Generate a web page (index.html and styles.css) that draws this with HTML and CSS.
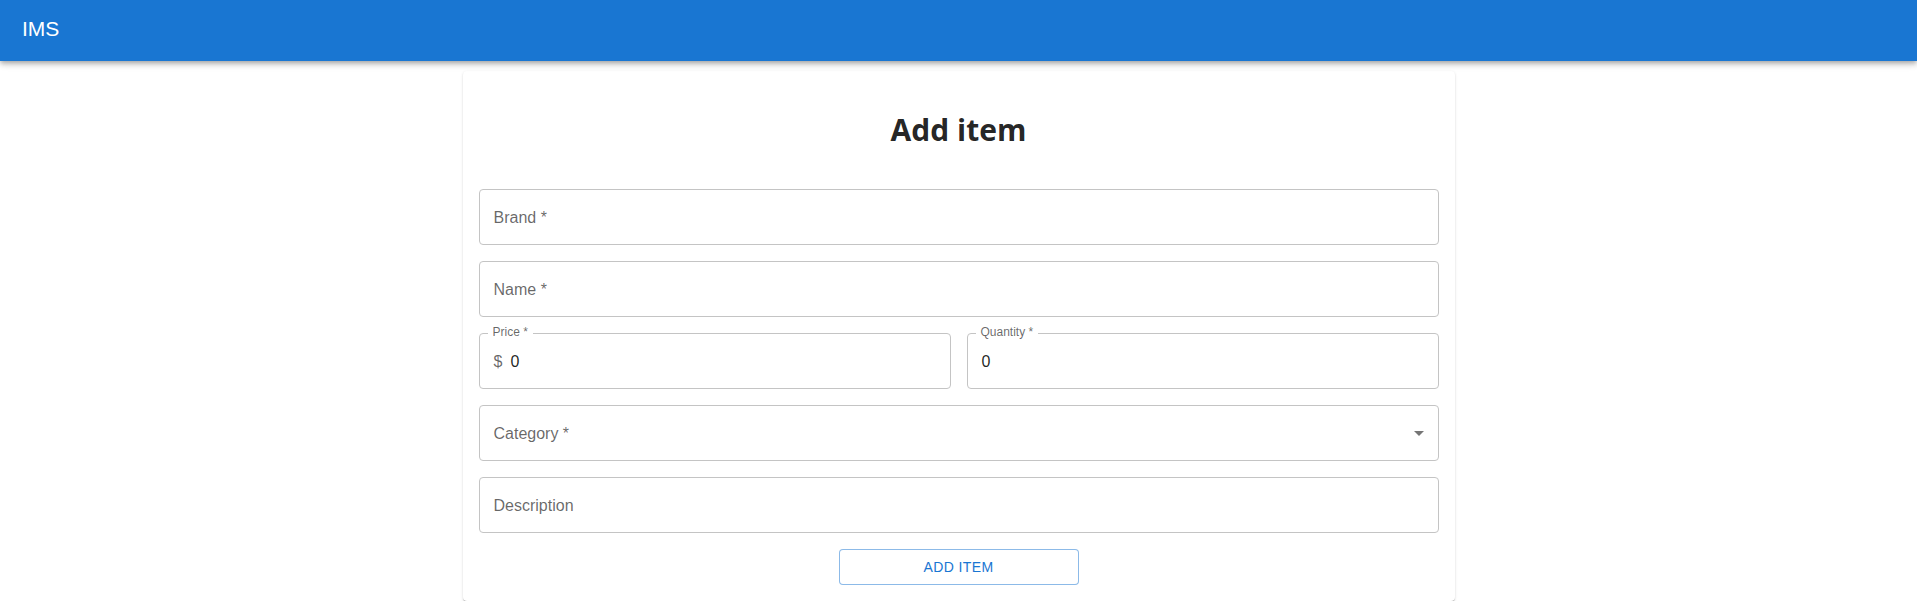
FILE: index.html
```html
<!DOCTYPE html>
<html lang="en">
<head>
<meta charset="utf-8">
<title>IMS</title>
<link rel="stylesheet" href="styles.css">
</head>
<body>
<header class="appbar">
  <div class="brand">IMS</div>
</header>
<main class="main">
  <section class="card">
    <h1 class="title">Add item</h1>
    <form class="form">
      <div class="field"><span class="label">Brand *</span></div>
      <div class="field"><span class="label">Name *</span></div>
      <div class="row">
        <div class="field">
          <span class="float-label">Price *</span>
          <span class="adorn">$</span><span class="value">0</span>
        </div>
        <div class="field">
          <span class="float-label">Quantity *</span>
          <span class="value">0</span>
        </div>
      </div>
      <div class="field">
        <span class="label">Category *</span>
        <svg class="arrow" viewBox="0 0 24 24" width="24" height="24"><path d="M7 10l5 5 5-5z"/></svg>
      </div>
      <div class="field"><span class="label">Description</span></div>
      <div class="actions">
        <button type="button" class="btn">ADD ITEM</button>
      </div>
    </form>
  </section>
</main>
</body>
</html>
```

FILE: styles.css
```css
* { box-sizing: border-box; }

body {
  margin: 0;
  background: #fff;
  font-family: "Liberation Sans", Arial, sans-serif;
  color: rgba(0, 0, 0, 0.87);
}

.appbar {
  position: relative;
  z-index: 2;
  height: 61px;
  background: #1976d2;
  color: #fff;
  display: flex;
  align-items: center;
  padding: 0 22px 4px;
  box-shadow: 0px 2px 4px -1px rgba(0,0,0,0.2), 0px 4px 5px 0px rgba(0,0,0,0.14), 0px 1px 10px 0px rgba(0,0,0,0.12);
}

.brand {
  font-size: 21px;
  line-height: 1.6;
}

.main {
  display: flex;
  justify-content: center;
  padding-top: 10px;
}

.card {
  width: 992px;
  padding: 16px;
  background: #fff;
  border-radius: 4px;
  box-shadow: 0px 2px 1px -1px rgba(0,0,0,0.2), 0px 1px 1px 0px rgba(0,0,0,0.14), 0px 1px 3px 0px rgba(0,0,0,0.12);
}

.title {
  margin: 23px 0 39px;
  text-align: center;
  font-family: "Open Sans", "Liberation Sans", sans-serif;
  font-weight: 700;
  font-size: 30px;
  line-height: 40px;
  color: rgba(0, 0, 0, 0.87);
}

.form {
  display: flex;
  flex-direction: column;
  gap: 16px;
  margin: 0;
}

.row {
  display: grid;
  grid-template-columns: 1fr 1fr;
  gap: 16px;
}

.field {
  position: relative;
  height: 56px;
  border: 1px solid #c4c4c4;
  border-radius: 4px;
  display: flex;
  align-items: center;
  padding: 0 14px;
  font-size: 16px;
  line-height: 23px;
}

.label {
  color: rgba(0, 0, 0, 0.6);
}

.float-label {
  position: absolute;
  top: -8px;
  left: 8px;
  padding: 0 5px;
  background: #fff;
  font-size: 12px;
  line-height: 12px;
  color: rgba(0, 0, 0, 0.6);
}

.adorn {
  color: rgba(0, 0, 0, 0.6);
  margin-right: 8px;
}

.value {
  color: rgba(0, 0, 0, 0.87);
}

.arrow {
  margin-left: auto;
  margin-right: -7px;
  fill: rgba(0, 0, 0, 0.54);
}

.actions {
  display: flex;
  justify-content: center;
}

.btn {
  width: 240px;
  height: 36px;
  border: 1px solid rgba(25, 118, 210, 0.5);
  border-radius: 4px;
  background: #fff;
  color: #1976d2;
  font-family: "Liberation Sans", Arial, sans-serif;
  font-size: 14px;
  letter-spacing: 0.4px;
  text-transform: uppercase;
  cursor: pointer;
}
```
